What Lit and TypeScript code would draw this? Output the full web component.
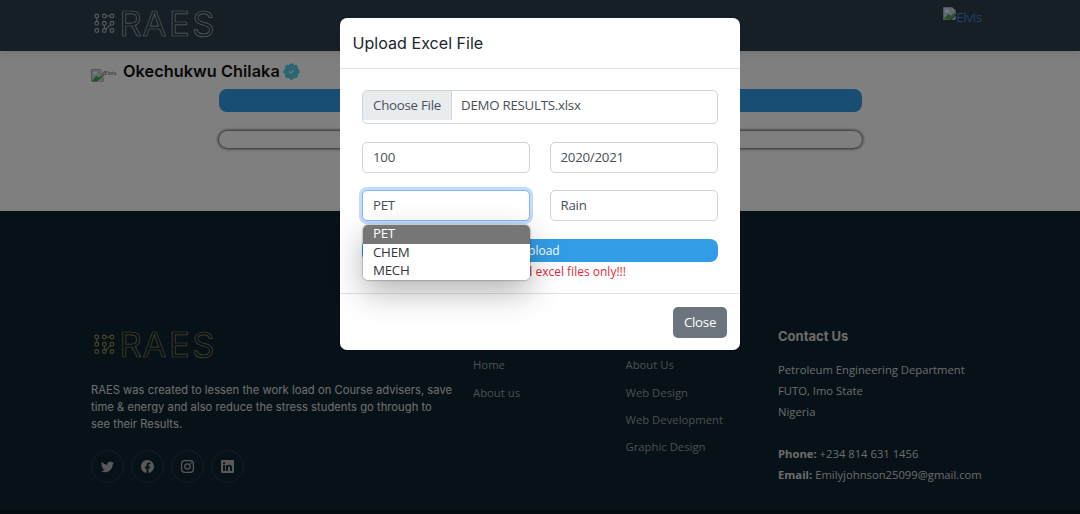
import { LitElement, html, css, svg } from "lit";
import { customElement, property } from "lit/decorators.js";

@customElement("raes-logo")
class RaesLogo extends LitElement {
  static styles = css`
    :host { display: block; width: 126px; height: 30px; }
    svg { display: block; overflow: visible; }
    .line { fill: none; stroke: currentColor; stroke-width: 1.1; }
    .word { font: 400 34.5px Inter, sans-serif; fill: none; stroke: currentColor; stroke-width: .7; }
  `;
  render() {
    const dots = [8, 15.3, 22.5].flatMap((y) => [5.8, 13.4, 21].map((x) => [x, y]));
    return html`<svg width="126" height="30" viewBox="0 0 126 30">
      <g class="line">
        ${dots.map(([x, y]) => svg`<circle cx=${x} cy=${y} r="1.9"></circle>`)}
        <path d="M5.800 9.900v3.500M15.300 8h3.800M13.400 17.200v3.400M19.700 16.700l-5 4.500"></path>
      </g>
      <text class="word" x="28.500 51.500 78 101.300" y="27.700">RAES</text>
    </svg>`;
  }
}

@customElement("broken-image")
class BrokenImage extends LitElement {
  @property() alt = "";
  static styles = css`
    :host { display: inline-flex; align-items: flex-start; }
    svg { display: block; width: 13px; height: 13px; flex: none; }
  `;
  render() {
    return html`<svg viewBox="0 0 13 13">
      <path d="M.5.5h8.500l3.500 3.500v3l-6 5.500h-6z" fill="#c5d3f0" stroke="#a9a9a9"></path>
      <path d="M9 .5v3.500h3.500z" fill="#fff" stroke="#a9a9a9" stroke-width=".6"></path>
      <ellipse cx="4" cy="4" rx="2" ry="1.200" fill="#fff"></ellipse>
      <path d="M1 12l4-5 3 1.500 4-3v1.800l-6 5.200z" fill="#4ca83a"></path>
      <path d="M8.500 12.500h4v-3.600z" fill="#c5d3f0" stroke="#a9a9a9" stroke-width=".6"></path>
    </svg><span>${this.alt}</span>`;
  }
}

const SOCIAL = [
  "M5.026 15c6.038 0 9.341-5.003 9.341-9.334 0-.14 0-.282-.006-.422A6.685 6.685 0 0 0 16 3.542a6.658 6.658 0 0 1-1.889.518 3.301 3.301 0 0 0 1.447-1.817 6.533 6.533 0 0 1-2.087.793A3.286 3.286 0 0 0 7.875 6.030a9.325 9.325 0 0 1-6.767-3.429 3.289 3.289 0 0 0 1.018 4.382A3.323 3.323 0 0 1 .64 6.575v.045a3.288 3.288 0 0 0 2.632 3.218 3.203 3.203 0 0 1-.865.115 3.230 3.230 0 0 1-.614-.057 3.283 3.283 0 0 0 3.067 2.277A6.588 6.588 0 0 1 .78 13.580a6.320 6.320 0 0 1-.78-.045A9.344 9.344 0 0 0 5.026 15z",
  "M16 8.049c0-4.446-3.582-8.050-8-8.050C3.580 0-.002 3.603-.002 8.050c0 4.017 2.926 7.347 6.750 7.951v-5.625h-2.030V8.050H6.750V6.275c0-2.017 1.195-3.131 3.022-3.131.876 0 1.791.157 1.791.157v1.980h-1.009c-.993 0-1.303.621-1.303 1.258v1.510h2.218l-.354 2.326H9.250V16c3.824-.604 6.750-3.934 6.750-7.951z",
  "M4.700 0h6.600A4.700 4.700 0 0 1 16 4.700v6.600a4.700 4.700 0 0 1-4.700 4.700H4.700A4.700 4.700 0 0 1 0 11.300V4.700A4.700 4.700 0 0 1 4.700 0zm.2 1.500a3.400 3.400 0 0 0-3.400 3.400v6.200a3.400 3.400 0 0 0 3.400 3.400h6.200a3.400 3.400 0 0 0 3.400-3.400V4.900a3.400 3.400 0 0 0-3.400-3.400zM8 3.900a4.100 4.100 0 1 1 0 8.200 4.100 4.100 0 0 1 0-8.200zm0 1.500a2.600 2.600 0 1 0 0 5.200 2.600 2.600 0 0 0 0-5.200zM12.300 2.800a1 1 0 1 1 0 2 1 1 0 0 1 0-2z",
  "M0 1.146C0 .513.526 0 1.175 0h13.650C15.474 0 16 .513 16 1.146v13.708c0 .633-.526 1.146-1.175 1.146H1.175C.526 16 0 15.487 0 14.854V1.146zm4.943 12.248V6.169H2.542v7.225h2.401zm-1.200-8.212c.837 0 1.358-.554 1.358-1.248-.015-.709-.520-1.248-1.342-1.248-.822 0-1.359.540-1.359 1.248 0 .694.521 1.248 1.327 1.248h.016zm4.908 8.212V9.359c0-.216.016-.432.080-.586.173-.431.568-.878 1.232-.878.869 0 1.216.662 1.216 1.634v3.865h2.401V9.250c0-2.220-1.184-3.252-2.764-3.252-1.274 0-1.845.700-2.165 1.193v.025h-.016l.016-.025V6.169h-2.400c.030.678 0 7.225 0 7.225h2.400z",
];

@customElement("app-root")
class AppRoot extends LitElement {
  static styles = css`
    * { box-sizing: border-box; }
    :host { display: block; position: relative; width: 1080px; height: 514px; overflow: hidden; background: #fff; font: 13.3px/21px "Open Sans", sans-serif; letter-spacing: -.26px; color: #212529; }
    .page { height: 514px; display: flex; flex-direction: column; }
    .nav { height: 51px; flex: none; background: #2a3f4b; padding: 7px 98px 0 91px; display: flex; justify-content: space-between; box-shadow: 0 1px 10px rgba(0,0,0,.14); }
    .nav raes-logo { color: #b4b8bb; margin-top: 1px; letter-spacing: 0; }
    .nav broken-image { color: #4a7ad8; line-height: 20px; }
    .main { height: 160px; flex: none; padding: 10px 91px 0; }
    .name { display: flex; align-items: center; height: 22px; font: 600 16.300px/22px Inter, sans-serif; letter-spacing: .05px; color: #111; }
    .name .who { margin-top: -2px; }
    .name broken-image { font: 400 6px/8px "Open Sans", sans-serif; width: 28px; margin: 7px 4px 0 0; color: #444; }
    .name svg { margin: -1px 0 0 3px; }
    .bar { width: 643px; height: 23px; margin: 6px 0 0 127.500px; border-radius: 8px; background: #339ce6; }
    .pill { width: 643px; height: 17px; margin: 19px 0 0 127.500px; border-radius: 9px; background: #fff; box-shadow: 0 0 3px 1px #555; }
    .foot { flex: 1; background: #0d2330; border-bottom: 4px solid #081824; display: flex; padding: 115px 0 0 91px; color: #fff; letter-spacing: 0; }
    .about { width: 382px; font: 11.200px/17px Inter, sans-serif; color: #e4e4e4; padding-top: 3px; }
    .about raes-logo { color: #9a8a55; }
    .about p { margin: 22.500px 0 17.500px; white-space: nowrap; opacity: .96; letter-spacing: .03px; }
    .social { display: flex; gap: 7.100px; }
    .dot { width: 33px; height: 33px; border: 1px solid #293b48; border-radius: 50%; display: grid; place-items: center; color: #b2b2b2; }
    .dot svg { width: 13px; height: 13px; display: block; }
    .links { font-size: 11.300px; line-height: 17px; color: #9a9ea2; padding-top: 30.300px; display: flex; flex-direction: column; gap: 10.400px; width: 152.500px; }
    .contact { font-size: 11.250px; color: #d8d8d8; }
    .contact h4 { margin: 0 0 12.500px; font: 700 13px/20px Inter, sans-serif; color: #d6d6d6; }
    .contact p { margin: 0 0 21px; }
    .shade { position: absolute; inset: 0; background: rgba(0,0,0,.5); }
    .modal { position: absolute; left: 340px; top: 18px; width: 400px; height: 332px; background: #fff; border-radius: 7px; display: flex; flex-direction: column; }
    .head { height: 51px; flex: none; border-bottom: 1px solid #dee2e6; padding: 14px 12.500px; font: 400 16.100px/23px Inter, sans-serif; letter-spacing: 0; color: #212529; }
    .body { height: 224px; flex: none; padding: 21px 22px 0; }
    .box { border: 1px solid #ced4da; border-radius: 5px; background: #fff; color: #495057; line-height: 29px; height: 31px; padding: 0 10px; }
    .file { display: flex; height: 34px; padding: 0; overflow: hidden; }
    .file .pick { background: #e9ecef; height: 29px; width: 89px; text-align: center; border-right: 1px solid #ced4da; margin-right: 9px; }
    .grid { display: grid; grid-template-columns: 168px 168.500px; column-gap: 19.500px; row-gap: 17px; margin: 18px 0; }
    .cell { position: relative; }
    .focus { border-color: #86b7fe; box-shadow: 0 0 0 3px #c2dbfe; }
    .menu { position: absolute; left: 1px; top: 35px; width: 166.500px; height: 55px; background: #fff; border-radius: 5px; overflow: hidden; line-height: 17px; color: #33383d; }
    .menu div { padding-left: 10px; height: 18.500px; }
    .menu .on { background: #767676; color: #fff; }
    .cast { position: absolute; left: 1px; top: 35px; width: 166.500px; height: 55px; border-radius: 5px; box-shadow: 0 0 2px rgba(0,0,0,.6), 0 12px 32px rgba(0,0,0,.3); }
    .send { height: 23px; border-radius: 8px; background: #339ce6; color: #fff; font-size: 12px; letter-spacing: 0; line-height: 23px; text-align: center; padding-right: 1px; }
    .warn { color: #e02d38; font-size: 12px; letter-spacing: 0; line-height: 19px; text-align: center; padding-right: 8px; }
    .end { flex: 1; border-top: 1px solid #dee2e6; padding: 13px 13px; display: flex; justify-content: flex-end; }
    .close { width: 54px; height: 31px; border-radius: 5px; background: #6c757d; color: #fff; line-height: 30px; text-align: center; }
  `;
  render() {
    return html`
      <div class="page">
        <div class="nav"><raes-logo></raes-logo><broken-image alt="Elvis"></broken-image></div>
        <div class="main">
          <div class="name">
            <broken-image alt="Elvis"></broken-image><span class="who">Okechukwu Chilaka</span>
            <svg width="17" height="17" viewBox="-8.500 -8.500 17 17">
              ${[0, 45, 90, 135, 180, 225, 270, 315].map((a) => svg`<circle cx="5.600" cy="0" r="2.600" fill="#5ccbe4" transform="rotate(${a})"></circle>`)}
              <circle r="6.300" fill="#5ccbe4"></circle>
              <path d="M-2.400 0l1.700 1.700L2.400-1.500" fill="none" stroke="#d8f2f8" stroke-width="1.200"></path>
            </svg>
          </div>
          <div class="bar"></div>
          <div class="pill"></div>
        </div>
        <div class="foot">
          <div class="about">
            <raes-logo></raes-logo>
            <p>RAES was created to lessen the work load on Course advisers, save<br>time &amp; energy and also reduce the stress students go through to<br>see their Results.</p>
            <div class="social">${SOCIAL.map((d) => html`<span class="dot"><svg viewBox="0 0 16 16"><path fill="currentColor" fill-rule="evenodd" d=${d}></path></svg></span>`)}</div>
          </div>
          <div class="links"><span>Home</span><span>About us</span></div>
          <div class="links"><span>About Us</span><span>Web Design</span><span>Web Development</span><span>Graphic Design</span></div>
          <div class="contact">
            <h4>Contact Us</h4>
            <p>Petroleum Engineering Department<br>FUTO, Imo State<br>Nigeria</p>
            <p><b>Phone:</b> +234 814 631 1456<br><b>Email:</b> Emilyjohnson25099@gmail.com</p>
          </div>
        </div>
      </div>
      <div class="shade"></div>
      <div class="modal">
        <div class="head">Upload Excel File</div>
        <div class="body">
          <div class="box file"><span class="pick">Choose File</span><span>DEMO RESULTS.xlsx</span></div>
          <div class="grid">
            <div class="box">100</div>
            <div class="box">2020/2021</div>
            <div class="cell">
              <div class="box focus">PET</div>
              <div class="cast"></div>
              <div class="menu"><div class="on">PET</div><div>CHEM</div><div>MECH</div></div>
            </div>
            <div class="box">Rain</div>
          </div>
          <div class="send">Upload</div>
          <div class="warn">You can upload excel files only!!!</div>
        </div>
        <div class="end"><span class="close">Close</span></div>
      </div>`;
  }
}
